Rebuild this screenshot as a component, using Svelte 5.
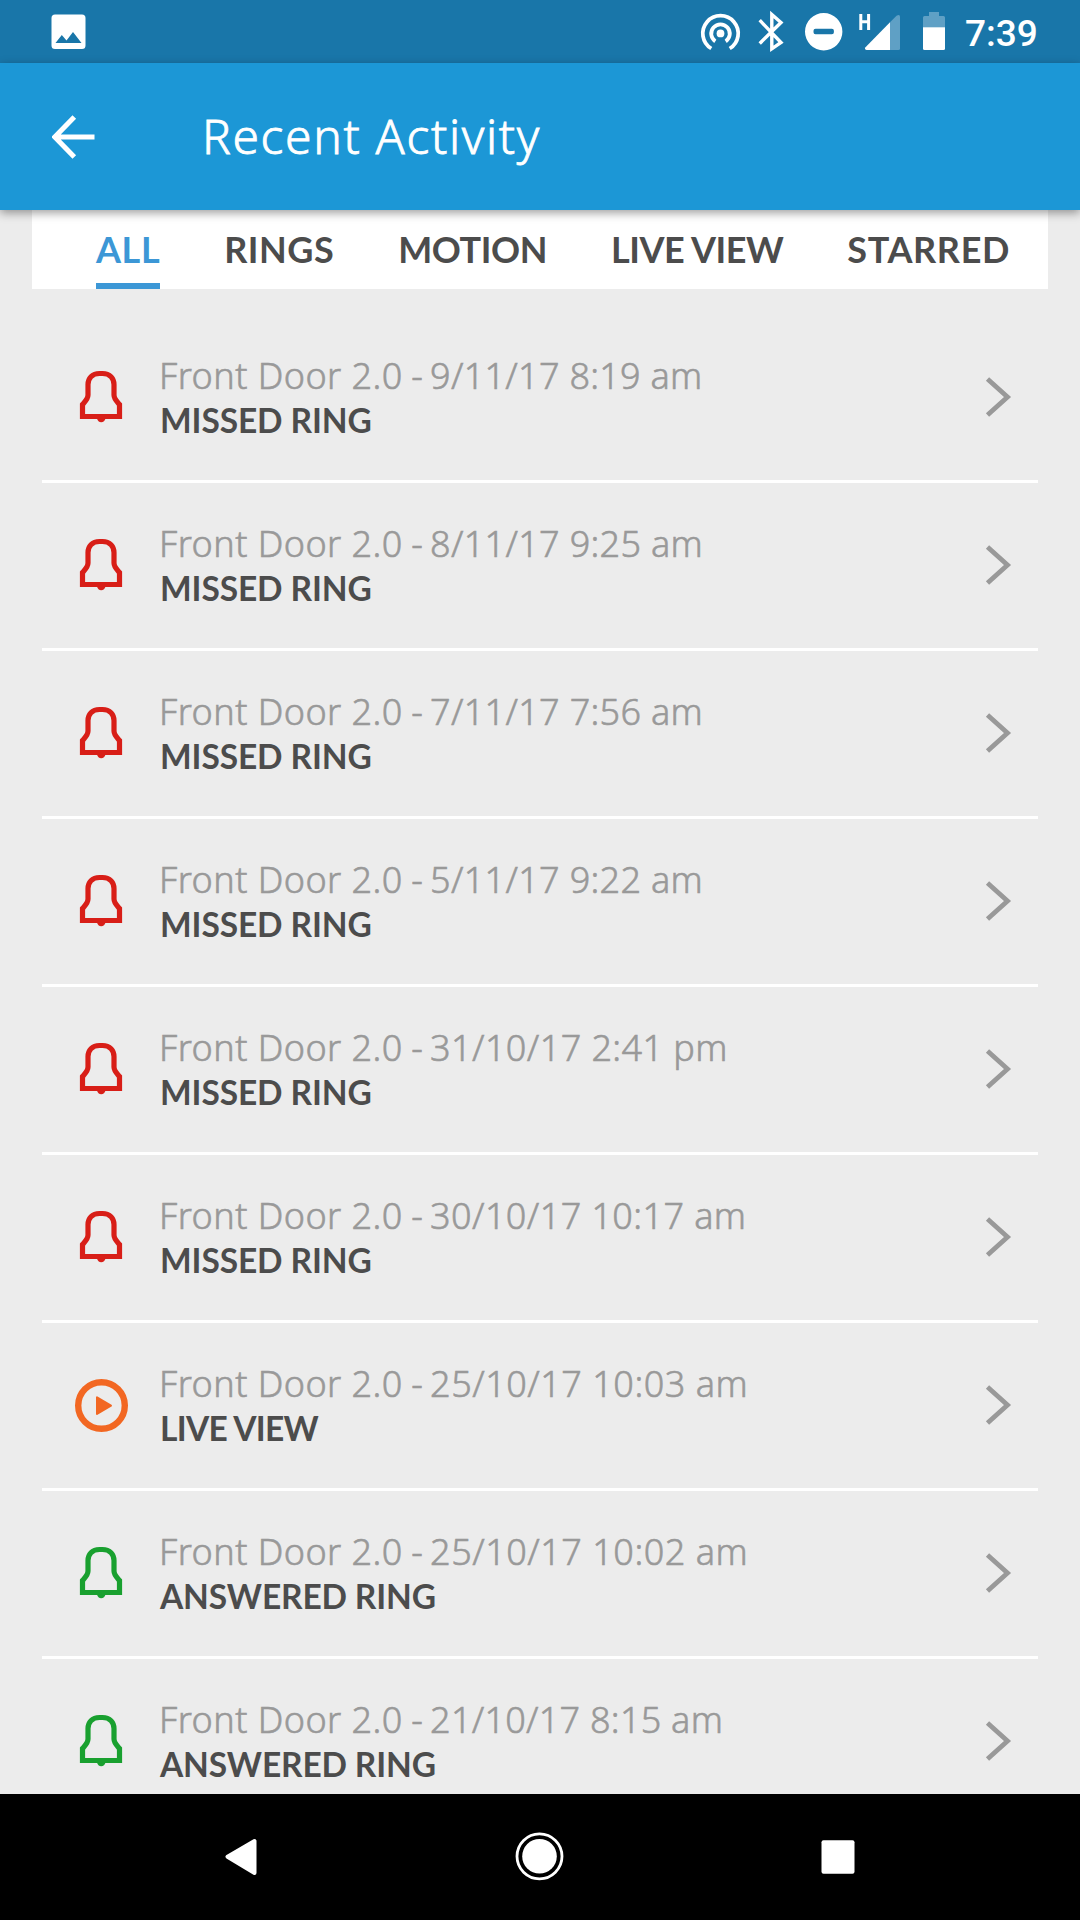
<script>
  const tabs = [
    { label: 'ALL', spacing: 0.6 },
    { label: 'RINGS', spacing: 0.5 },
    { label: 'MOTION', spacing: -0.4 },
    { label: 'LIVE VIEW', spacing: -0.5 },
    { label: 'STARRED', spacing: 0.65 }
  ];

  const kinds = {
    missed: { label: 'MISSED RING', color: '#d81e17', spacing: -0.1 },
    live: { label: 'LIVE VIEW', color: '#f26722', spacing: -0.7 },
    answered: { label: 'ANSWERED RING', color: '#19a02f', spacing: -0.15 }
  };

  const events = [
    { when: '9/11/17 8:19 am', kind: 'missed', spacing: 0.27 },
    { when: '8/11/17 9:25 am', kind: 'missed', spacing: 0.3 },
    { when: '7/11/17 7:56 am', kind: 'missed', spacing: 0.3 },
    { when: '5/11/17 9:22 am', kind: 'missed', spacing: 0.3 },
    { when: '31/10/17 2:41 pm', kind: 'missed', spacing: 0.4 },
    { when: '30/10/17 10:17 am', kind: 'missed', spacing: 0.4 },
    { when: '25/10/17 10:03 am', kind: 'live', spacing: 0.5 },
    { when: '25/10/17 10:02 am', kind: 'answered', spacing: 0.5 },
    { when: '21/10/17 8:15 am', kind: 'answered', spacing: 0.25 }
  ];
</script>

<div class="screen">
  <div class="status">
    <svg class="photo" width="36" height="38" viewBox="0 0 36 38">
      <path fill="#fff" fill-rule="evenodd" d="M4 1.5h27a3.5 3.5 0 0 1 3.500 3.500v27.500a3.500 3.500 0 0 1-3.500 3.500h-27a3.500 3.500 0 0 1-3.500-3.500v-27.500a3.500 3.500 0 0 1 3.500-3.500zM4.500 30h26L22 19l-6.500 8.500L10.800 22z" />
    </svg>
    <svg class="tray" width="280" height="63" viewBox="690 0 280 63">
      <g fill="none" stroke="#fff" stroke-width="3.8">
        <path d="M711.300 48.500A17.700 17.700 0 1 1 729.700 48.500" />
        <path d="M715.300 41.300A9.300 9.300 0 1 1 725.700 41.300" />
        <path d="M759.700 20.200L781 42.500L771.800 48.800V14.500L781 22.500L759.700 43.500" stroke-width="3.400" />
      </g>
      <circle cx="720.500" cy="33.400" r="3.900" fill="#fff" />
      <path fill="#fff" fill-rule="evenodd" d="M823.700 13a18.700 18.700 0 1 0 0 37.400a18.700 18.700 0 1 0 0-37.400zM815.500 28.800h16.400a2 2 0 0 1 2 2v1.400a2 2 0 0 1-2 2h-16.400a2 2 0 0 1-2-2v-1.400a2 2 0 0 1 2-2z" />
      <path d="M860.800 14v16M868.600 14v16M860.800 21.700h7.800" fill="none" stroke="#fff" stroke-width="3" />
      <path fill="#fff" d="M890 22.300V50H866.500q-2.500-.800-1-2.700z" />
      <path fill="#5fa0c5" d="M890 22.300L896.500 15.800Q900 13.500 900 17V48.500Q900 50 898.500 50H890z" />
      <path fill="#5fa0c5" d="M929 12h10v4h4.500q1.500 0 1.500 1.500V27.500h-22V17.500q0-1.500 1.500-1.500h4.500z" />
      <path fill="#fff" d="M923 27.300h22V48.500q0 1.500-1.500 1.500h-19q-1.500 0-1.500-1.500z" />
    </svg>
    <span class="clock">7:39</span>
  </div>

  <header>
    <svg width="44" height="44" viewBox="0 0 44 44">
      <path d="M42.500 22H5M22.300 2L2.800 22L22.300 42" fill="none" stroke="#fff" stroke-width="5" />
    </svg>
    <h1>Recent Activity</h1>
  </header>

  <nav class="tabs">
    {#each tabs as tab, i}
      <button class:active={i === 0} style:letter-spacing="{tab.spacing}px">{tab.label}</button>
    {/each}
  </nav>

  <main>
    {#each events as event}
      {@const kind = kinds[event.kind]}
      <div class="row">
        <svg class="kind" width="56" height="56" viewBox="0 0 56 56" style:color={kind.color}>
          {#if event.kind === 'live'}
            <circle cx="28.500" cy="28.500" r="23.300" fill="none" stroke="currentColor" stroke-width="6.400" />
            <path fill="currentColor" stroke="currentColor" stroke-width="2" stroke-linejoin="round" d="M24 20.300V37L38 28.700z" />
          {:else}
            <path fill="none" stroke="currentColor" stroke-width="5.200" d="M26.500 4.500h3C37 4.500 41 9.500 41 15.500V26C41 30 44 32.500 46.500 35.500V47.500H9.500V35.500C12 32.500 15 30 15 26V15.500C15 9.500 19 4.500 26.500 4.500z" />
            <path fill="currentColor" d="M24 49.500H32.500Q31.500 53.200 28.200 53.200T24 49.500z" />
          {/if}
        </svg>
        <div class="info">
          <p class="when"><span class="device">Front Door 2.0</span><span class="dash">{' - '}</span><span style:letter-spacing="{event.spacing}px">{event.when}</span></p>
          <p class="what" style:letter-spacing="{kind.spacing}px">{kind.label}</p>
        </div>
        <svg class="chevron" width="28" height="42" viewBox="0 0 28 42">
          <path d="M3.500 3L23.500 21L3.500 39" fill="none" stroke="#999" stroke-width="4.800" />
        </svg>
      </div>
    {/each}
  </main>

  <footer>
    <svg width="1080" height="126" viewBox="0 0 1080 126">
      <path fill="#fff" stroke="#fff" stroke-width="4" stroke-linejoin="round" d="M227.500 62.700L254.500 47V79z" />
      <circle cx="539.500" cy="62.300" r="17.300" fill="#fff" />
      <circle cx="539.500" cy="62.300" r="22.500" fill="none" stroke="#fff" stroke-width="2.800" />
      <rect x="821.500" y="46.300" width="33" height="33.400" rx="2" fill="#fff" />
    </svg>
  </footer>
</div>

<style>
  :global(body) { margin: 0; background: #ececec; }
  .screen { width: 1080px; height: 1920px; display: flex; flex-direction: column; background: #ececec; overflow: hidden; }
  svg { display: block; flex: none; }
  .status { height: 63px; flex: none; display: flex; align-items: flex-start; background: #1976a9; }
  .photo { margin: 13px 0 0 51px; }
  .tray { margin-left: 603px; margin-right: -5px; }
  .clock { font: 500 37px/67px Roboto, sans-serif; color: #fff; }
  header { height: 147px; flex: none; display: flex; align-items: center; background: #1c97d6; box-shadow: 0 3px 9px rgba(0, 0, 0, .38); z-index: 1; box-sizing: border-box; padding-left: 52px; }
  h1 { margin: 0 0 2px 106px; font: 300 48px/60px 'Noto Sans', sans-serif; letter-spacing: 1.650px; color: #fff; -webkit-text-stroke: .8px #fff; }
  .tabs { height: 79px; flex: none; margin: 0 32px; box-sizing: border-box; padding-left: 64px; display: flex; gap: 64px; background: #fff; }
  .tabs button { font: 700 36px/67px Lato, sans-serif; height: 79px; margin: 0; padding: 6px 0 0; border: 0; box-sizing: border-box; border-bottom: 6px solid transparent; background: none; color: #4c4c4c; white-space: nowrap; }
  .tabs .active { color: #3c97d6; border-bottom-color: #3c97d6; }
  main { flex: 1; min-height: 0; overflow: hidden; padding: 26px 42px 0; }
  .row { height: 168px; box-sizing: border-box; border-bottom: 3px solid #fff; display: flex; align-items: center; }
  .kind { margin: 0 0 2px 31px; }
  .info { flex: 1; margin-left: 30px; }
  p { margin: 0; white-space: nowrap; line-height: 45px; }
  .when { font-family: 'Noto Sans', sans-serif; font-size: 36px; font-weight: 300; color: #999; -webkit-text-stroke: .6px #999; white-space: pre; }
  .device { letter-spacing: .450px; }
  .dash { letter-spacing: -1px; }
  .what { font-family: Lato, sans-serif; font-size: 33.500px; font-weight: 700; color: #4c4c4c; padding-left: 1px; }
  .chevron { margin: 0 26px 2px 0; }
  footer { height: 126px; flex: none; background: #000; z-index: 1; }
</style>
